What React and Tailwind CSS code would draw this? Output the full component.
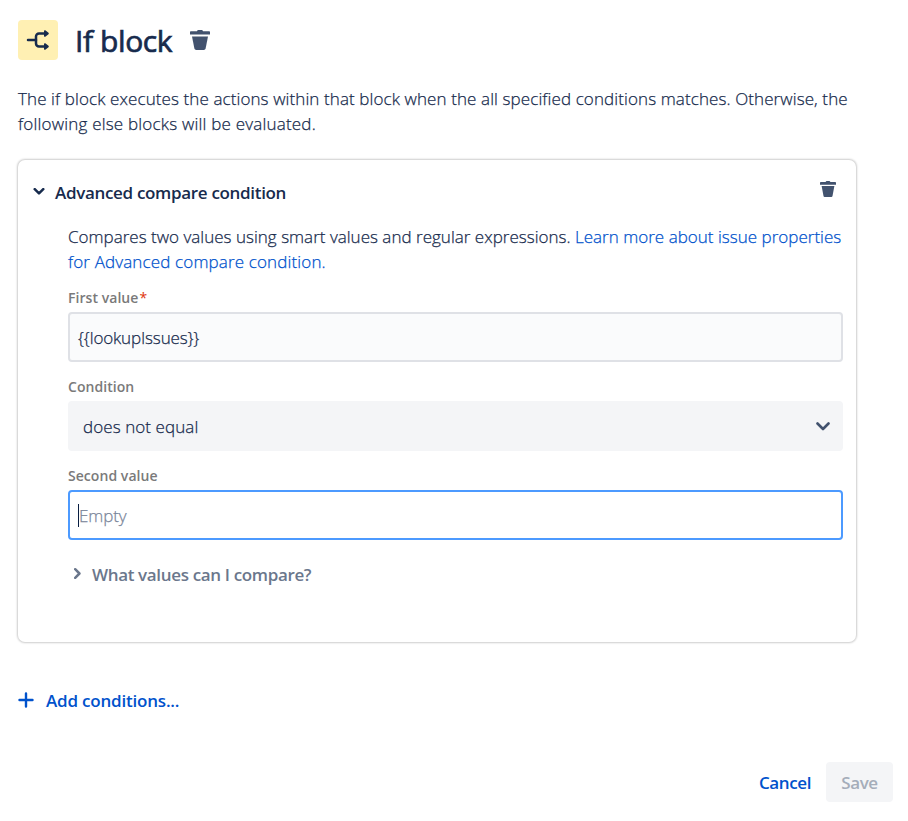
import React from "react";

function TrashIcon({ className }) {
  return (
    <svg viewBox="0 0 20 20" className={className} fill="currentColor">
      <path d="M1 1.200h6C7.200 .4 7.800 0 8.500 0h3c.7 0 1.300.4 1.500 1.200h6c.6 0 1 .4 1 1V4.600H0V2.200c0-.6.400-1 1-1z" />
      <path d="M2 6.400h16l-2.400 12.200c-.2.900-.9 1.400-1.800 1.400H6.200c-.9 0-1.600-.5-1.800-1.400z" />
    </svg>
  );
}

function BranchIcon() {
  return (
    <svg width="24" height="22" viewBox="0 0 24 22" fill="none" stroke="#172B4D" strokeWidth="2.5" strokeLinejoin="round">
      <path d="M2 11h8" strokeLinecap="round" />
      <path d="M19 4.500h-6a3 3 0 0 0-3 3v7a3 3 0 0 0 3 3h6" />
      <path d="M18.800 2l3.200 2.500-3.200 2.500zM18.800 15l3.200 2.500-3.200 2.500z" fill="#172B4D" strokeWidth="1.600" />
    </svg>
  );
}

function Chevron({ className, width = 2.600 }) {
  return (
    <svg viewBox="0 0 14 9" className={className} fill="none" stroke="currentColor" strokeWidth={width} strokeLinecap="round" strokeLinejoin="round">
      <path d="M1.500 1.500L7 7l5.500-5.500" />
    </svg>
  );
}

function Label({ children }) {
  return (
    <label className="flex h-[26px] items-center pb-[4px] text-[14px] font-semibold tracking-[0.05px] text-[#7A7A7A]">
      {children}
    </label>
  );
}

export default function App() {
  return (
    <main className="h-[821px] w-[908px] overflow-hidden bg-white pt-5 pl-[18px] font-['Open_Sans','Noto_Sans',sans-serif] text-[17px] leading-[25px] text-[#172B4D]">
      <header className="flex h-10 items-center">
        <div className="flex size-10 items-center justify-center rounded-[4px] bg-[#FFF0B3]">
          <BranchIcon />
        </div>
        <h1 className="ml-[17px] w-[115px] pt-px text-[30px] leading-10 font-normal tracking-[-0.4px] whitespace-nowrap [-webkit-text-stroke:0.7px_#172B4D]">If block</h1>
        <TrashIcon className="size-5 text-[#42526E]" />
      </header>

      <p className="mt-[26px] font-light tracking-[0.1px] whitespace-nowrap [-webkit-text-stroke:0.25px]">
        The if block executes the actions within that block when the all specified conditions matches. Otherwise, the
        <br />
        <span className="tracking-[0.2px]">following else blocks will be evaluated.</span>
      </p>

      <section className="mt-6 h-[482px] w-[838px] rounded-[7px] bg-white pt-4 pr-[13px] pl-[50px] shadow-[0_0_2px_1px_rgba(0,0,0,0.2)]">
        <div className="-ml-[35px] flex h-8 items-center">
          <Chevron className="mb-px h-[7px] w-[12px]" width={3.200} />
          <h2 className="ml-[10px] flex-1 font-semibold tracking-[-0.32px]">Advanced compare condition</h2>
          <TrashIcon className="mr-[7px] mb-[7px] size-4 text-[#42526E]" />
        </div>
        <p className="mt-[16px] font-light tracking-[0.015px] whitespace-nowrap [-webkit-text-stroke:0.25px]">
          Compares two values using smart values and regular expressions.{" "}
          <a className="text-[#0052CC]">
            Learn more about issue properties
            <br />
            <span className="tracking-[0.14px]">for Advanced compare condition.</span>
          </a>
        </p>

        <div className="mt-[12px]">
          <Label>
            First value<span className="ml-px font-normal text-[#DE350B]">*</span>
          </Label>
          <div className="flex h-[50px] items-center rounded-[4px] border-2 border-[#DFE1E6] bg-[#FAFBFC] px-2 font-light tracking-[-0.15px] [-webkit-text-stroke:0.25px]">
            {"{{lookupIssues}}"}
          </div>
        </div>

        <div className="mt-[13px]">
          <Label>Condition</Label>
          <div className="flex h-[50px] items-center justify-between rounded-[4px] bg-[#F4F5F7] pr-[13px] pl-[15px] font-light tracking-[0.08px] [-webkit-text-stroke:0.25px]">
            does not equal
            <Chevron className="h-[9px] w-[14px] text-[#42526E]" />
          </div>
        </div>

        <div className="mt-[13px]">
          <Label>Second value</Label>
          <div className="flex h-[50px] items-center rounded-[4px] border-2 border-[#4C9AFF] bg-white px-2 font-light tracking-[-0.1px] text-[#7A869A] [-webkit-text-stroke:0.25px]">
            <span className="h-[23px] w-px bg-[#091E42]" />
            Empty
          </div>
        </div>

        <div className="mt-[22px] flex h-[25px] items-center text-[#6B778C]">
          <Chevron className="mb-[3px] ml-[4px] h-[7px] w-[11px] -rotate-90" width={3.200} />
          <span className="ml-[9px] font-semibold tracking-[-0.35px]">What values can I compare?</span>
        </div>
      </section>

      <button className="mt-[46px] flex h-[25px] items-center text-[#0052CC]">
        <svg className="mb-px" width="16" height="16" viewBox="0 0 16 16" stroke="currentColor" strokeWidth="2.400" strokeLinecap="round">
          <path d="M8 1.500v13M1.500 8h13" />
        </svg>
        <span className="ml-3 font-semibold tracking-[-0.2px]">Add conditions...</span>
      </button>

      <footer className="mt-[49px] flex h-10 items-center justify-end gap-[15px] pr-[15px] font-semibold tracking-[-0.4px]">
        <button className="text-[#0052CC]">Cancel</button>
        <button className="h-10 w-[67px] rounded-[4px] bg-[#F4F5F7] text-[#A5ADBA]">Save</button>
      </footer>
    </main>
  );
}
